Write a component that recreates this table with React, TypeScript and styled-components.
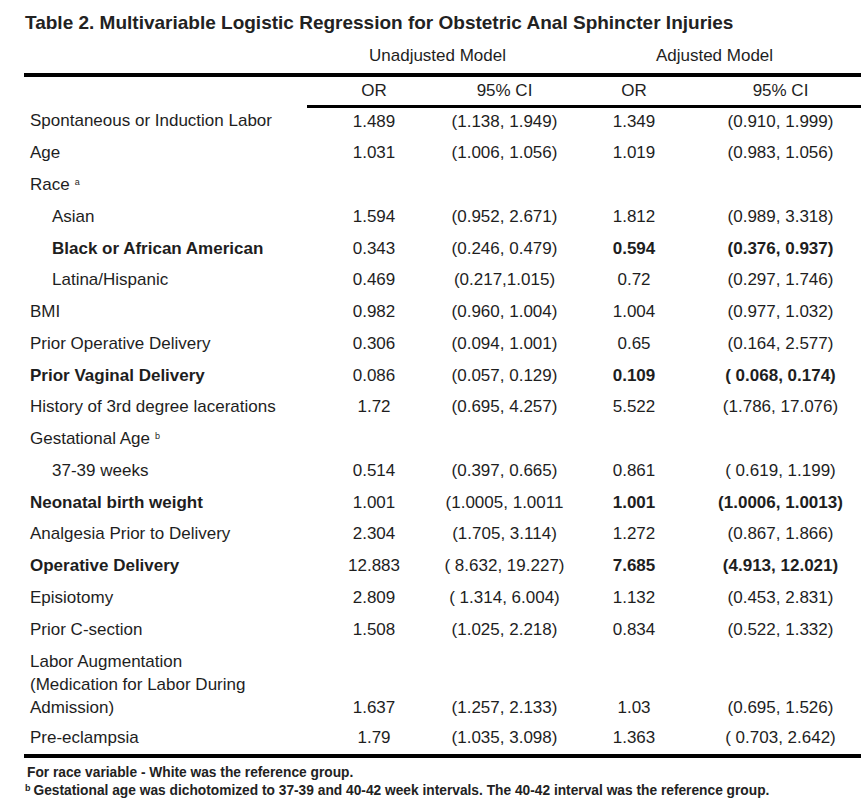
import React from "react";
import styled, { createGlobalStyle } from "styled-components";

const Global = createGlobalStyle`
  html, body { margin: 0; padding: 0; background: #ffffff; }
  body { font-family: "Liberation Sans", Arial, sans-serif; color: #1e1e1e; }
`;

const Page = styled.div`
  padding: 11px 5px 0 24px;
  width: 837px;
`;

const Title = styled.div`
  font-weight: bold;
  font-size: 19px;
  line-height: 24px;
  color: #222;
  padding-left: 1px;
`;

const Table = styled.table`
  border-collapse: collapse;
  table-layout: fixed;
  width: 837px;
  margin-top: 11px;
  font-size: 17px;
`;

const SpanCell = styled.th`
  font-weight: normal;
  text-align: center;
  line-height: 20px;
  padding: 0 0 7px 0;
  border-bottom: 4px solid #000;
`;

const HeadCell = styled.th<{ $blank?: boolean }>`
  font-weight: normal;
  text-align: center;
  line-height: 20px;
  height: 28px;
  padding: 0;
  border-bottom: ${(p) => (p.$blank ? "none" : "3px solid #000")};
`;

const Row = styled.tr<{ $first?: boolean; $tall?: boolean }>`
  height: ${(p) => (p.$first ? "31px" : p.$tall ? "77px" : "31.75px")};
`;

const Label = styled.td<{ $indent?: boolean; $bold?: boolean; $tall?: boolean; $first?: boolean }>`
  padding: 0 0 0 ${(p) => (p.$indent ? "28px" : "6px")};
  font-weight: ${(p) => (p.$bold ? "bold" : "normal")};
  line-height: ${(p) => (p.$tall ? "23px" : "20px")};
  vertical-align: ${(p) => (p.$tall ? "top" : "middle")};
  padding-top: ${(p) => (p.$tall ? "4px" : "0")};
  padding-bottom: ${(p) => (p.$first ? "2px" : "0")};
`;

const Value = styled.td<{ $bold?: boolean; $tall?: boolean; $first?: boolean }>`
  text-align: center;
  padding: 0;
  font-weight: ${(p) => (p.$bold ? "bold" : "normal")};
  line-height: ${(p) => (p.$tall ? "23px" : "20px")};
  vertical-align: ${(p) => (p.$tall ? "bottom" : "middle")};
  padding-bottom: ${(p) => (p.$tall ? "4px" : p.$first ? "2px" : "0")};
`;

const Sup = styled.sup`
  font-size: 9px;
  line-height: 0;
  vertical-align: 5px;
  margin-left: 5px;
`;

const Bottom = styled.div`
  border-top: 4px solid #000;
  width: 837px;
`;

const Notes = styled.div`
  font-weight: bold;
  font-size: 13.75px;
  line-height: 18px;
  color: #222;
  padding-top: 6px;
`;

const Note = styled.div<{ $pad?: boolean }>`
  padding-left: ${(p) => (p.$pad ? "3px" : "1px")};
`;

const NoteSup = styled.sup`
  font-size: 9px;
  line-height: 0;
  vertical-align: 4px;
  margin-right: 3px;
`;

type R = {
  label: React.ReactNode;
  v?: [string, string, string, string];
  indent?: boolean;
  bold?: boolean;
  tall?: boolean;
};

const rows: R[] = [
  { label: "Spontaneous or Induction Labor", v: ["1.489", "(1.138, 1.949)", "1.349", "(0.910, 1.999)"] },
  { label: "Age", v: ["1.031", "(1.006, 1.056)", "1.019", "(0.983, 1.056)"] },
  { label: <>Race<Sup>a</Sup></> },
  { label: "Asian", indent: true, v: ["1.594", "(0.952, 2.671)", "1.812", "(0.989, 3.318)"] },
  { label: "Black or African American", indent: true, bold: true, v: ["0.343", "(0.246, 0.479)", "0.594", "(0.376, 0.937)"] },
  { label: "Latina/Hispanic", indent: true, v: ["0.469", "(0.217,1.015)", "0.72", "(0.297, 1.746)"] },
  { label: "BMI", v: ["0.982", "(0.960, 1.004)", "1.004", "(0.977, 1.032)"] },
  { label: "Prior Operative Delivery", v: ["0.306", "(0.094, 1.001)", "0.65", "(0.164, 2.577)"] },
  { label: "Prior Vaginal Delivery", bold: true, v: ["0.086", "(0.057, 0.129)", "0.109", "( 0.068, 0.174)"] },
  { label: "History of 3rd degree lacerations", v: ["1.72", "(0.695, 4.257)", "5.522", "(1.786, 17.076)"] },
  { label: <>Gestational Age<Sup>b</Sup></> },
  { label: "37-39 weeks", indent: true, v: ["0.514", "(0.397, 0.665)", "0.861", "( 0.619, 1.199)"] },
  { label: "Neonatal birth weight", bold: true, v: ["1.001", "(1.0005, 1.0011", "1.001", "(1.0006, 1.0013)"] },
  { label: "Analgesia Prior to Delivery", v: ["2.304", "(1.705, 3.114)", "1.272", "(0.867, 1.866)"] },
  { label: "Operative Delivery", bold: true, v: ["12.883", "( 8.632, 19.227)", "7.685", "(4.913, 12.021)"] },
  { label: "Episiotomy", v: ["2.809", "( 1.314, 6.004)", "1.132", "(0.453, 2.831)"] },
  { label: "Prior C-section", v: ["1.508", "(1.025, 2.218)", "0.834", "(0.522, 1.332)"] },
  {
    label: <>Labor Augmentation<br />(Medication for Labor During<br />Admission)</>,
    tall: true,
    v: ["1.637", "(1.257, 2.133)", "1.03", "(0.695, 1.526)"],
  },
  { label: "Pre-eclampsia", v: ["1.79", "(1.035, 3.098)", "1.363", "( 0.703, 2.642)"] },
];

export default function App() {
  return (
    <Page>
      <Global />
      <Title>Table 2. Multivariable Logistic Regression for Obstetric Anal Sphincter Injuries</Title>
      <Table>
        <colgroup>
          <col style={{ width: 283 }} />
          <col style={{ width: 134 }} />
          <col style={{ width: 127 }} />
          <col style={{ width: 132 }} />
          <col style={{ width: 161 }} />
        </colgroup>
        <thead>
          <tr>
            <SpanCell />
            <SpanCell colSpan={2}>Unadjusted Model</SpanCell>
            <SpanCell colSpan={2}>Adjusted Model</SpanCell>
          </tr>
          <tr>
            <HeadCell $blank />
            <HeadCell>OR</HeadCell>
            <HeadCell>95% CI</HeadCell>
            <HeadCell>OR</HeadCell>
            <HeadCell>95% CI</HeadCell>
          </tr>
        </thead>
        <tbody>
          {rows.map((r, i) => {
            const first = i === 0;
            return (
              <Row key={i} $first={first} $tall={r.tall}>
                <Label $indent={r.indent} $bold={r.bold} $tall={r.tall} $first={first}>
                  {r.label}
                </Label>
                {[0, 1, 2, 3].map((j) => (
                  <Value key={j} $bold={r.bold && j >= 2} $tall={r.tall} $first={first}>
                    {r.v ? r.v[j] : ""}
                  </Value>
                ))}
              </Row>
            );
          })}
        </tbody>
      </Table>
      <Bottom />
      <Notes>
        <Note $pad>For race variable - White was the reference group.</Note>
        <Note>
          <NoteSup>b</NoteSup>Gestational age was dichotomized to 37-39 and 40-42 week intervals. The 40-42 interval was the reference group.
        </Note>
      </Notes>
    </Page>
  );
}
